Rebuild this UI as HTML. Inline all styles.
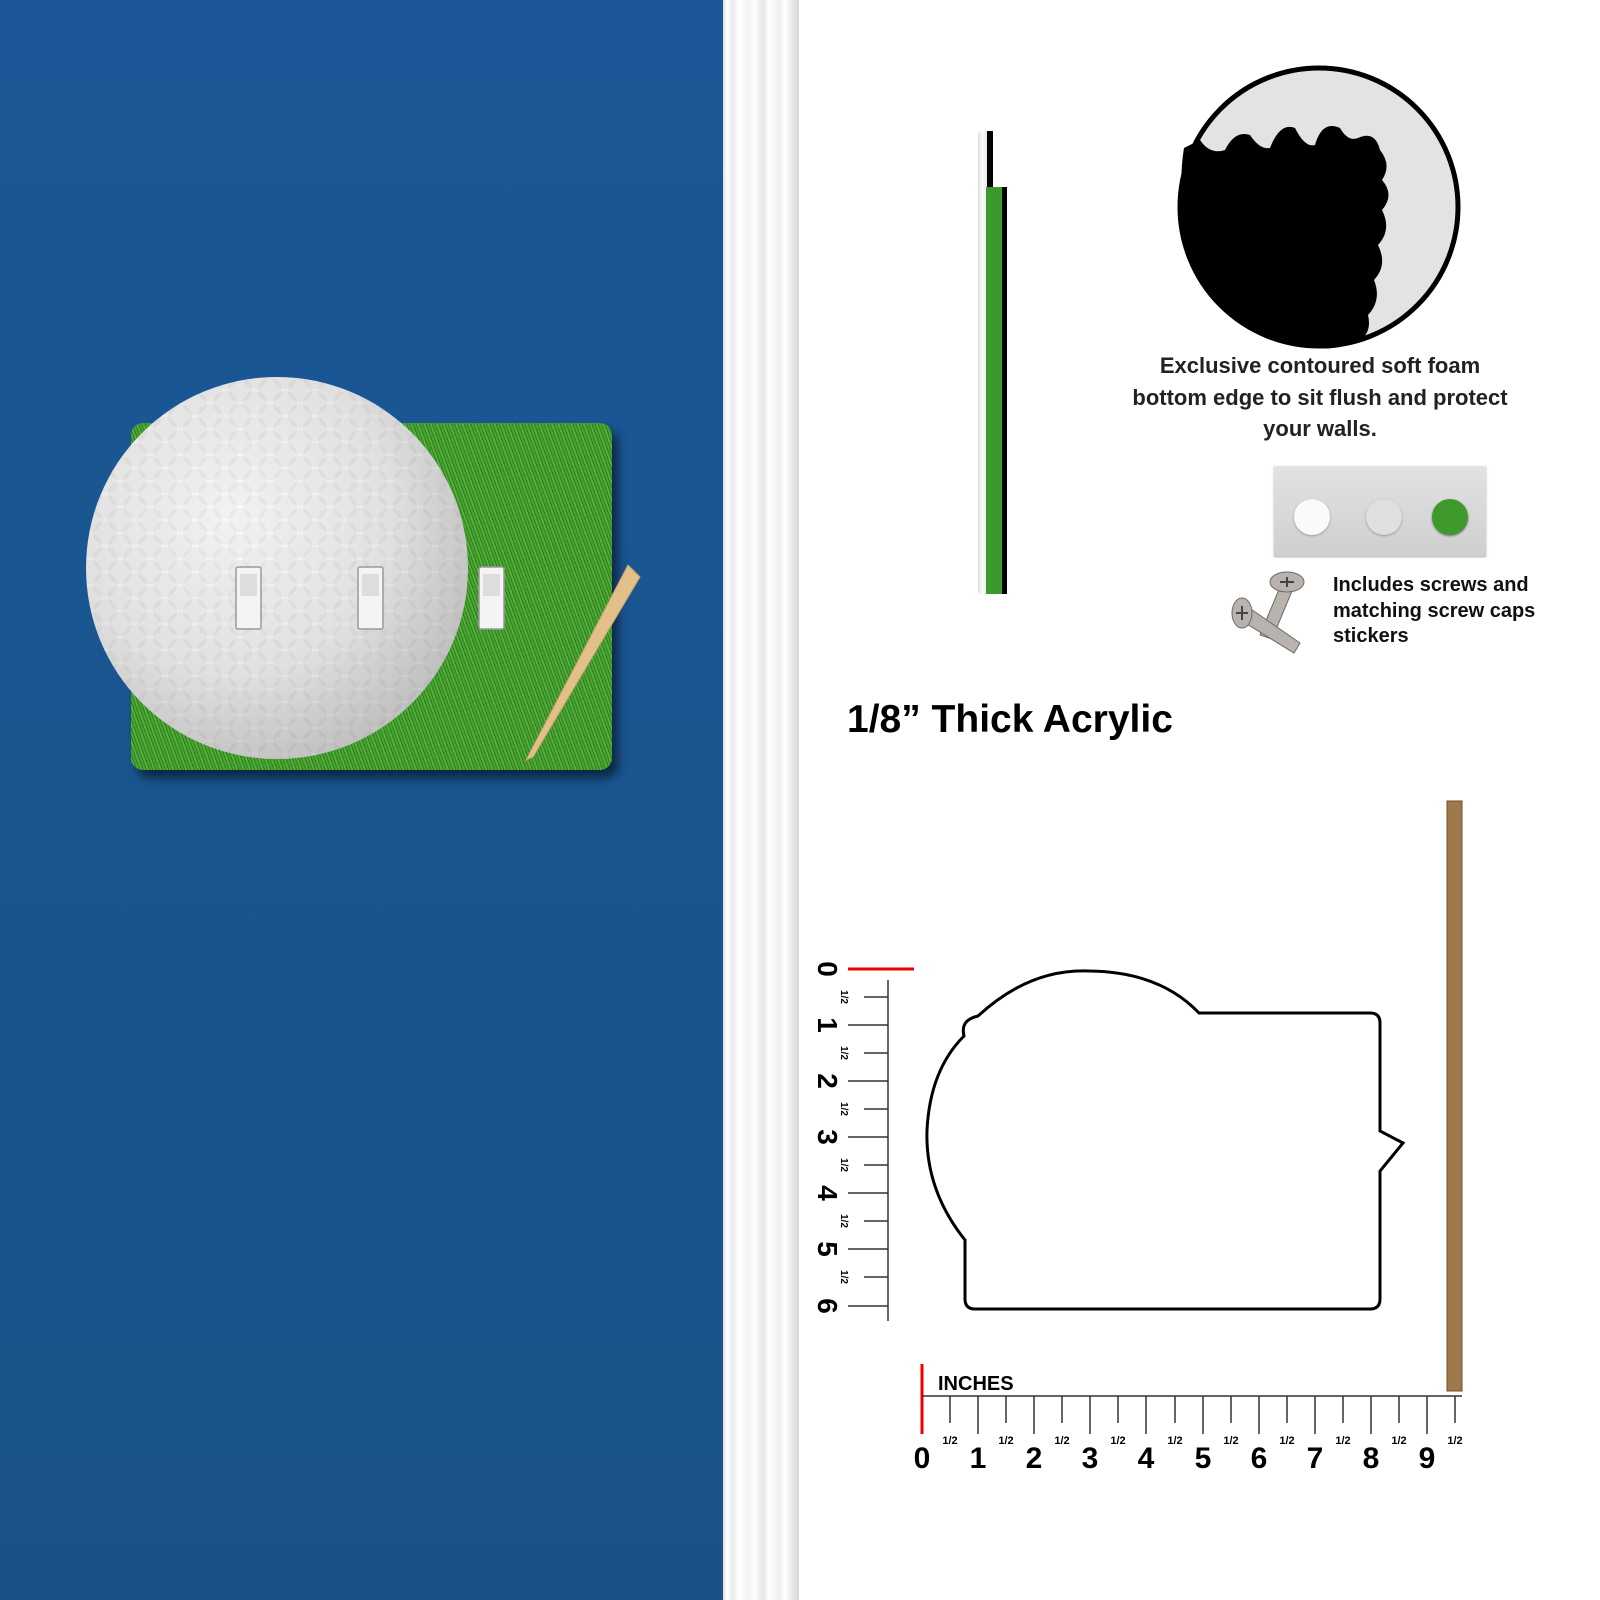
<!DOCTYPE html>
<html><head><meta charset="utf-8"><style>
*{margin:0;padding:0}
body{width:1600px;height:1600px;position:relative;overflow:hidden;background:#fff;font-family:"Liberation Sans",sans-serif}
.a{position:absolute}
</style></head><body>
<div class="a" style="left:0;top:0;width:723px;height:1600px;background:linear-gradient(180deg,#1b5796,#1a5590 50%,#1a5288)"></div>
<div class="a" style="left:723px;top:0;width:76px;height:1600px;background:linear-gradient(90deg,#dcdde0 0,#fff 4px,#e9eaec 10px,#fff 16px,#f2f2f3 26px,#fff 32px,#e4e5e7 40px,#fff 46px,#f0f0f1 56px,#fff 62px,#e6e6e8 70px,#d8d8da 76px)"></div>

<!-- plate -->
<div class="a" style="left:131px;top:423px;width:481px;height:347px;border-radius:12px;background:repeating-linear-gradient(70deg,#4aa332 0 2px,#2d7f1f 2px 3px,#55b03a 3px 5px,#2a7a1c 5px 6px),#3a9227;box-shadow:6px 8px 10px rgba(0,0,0,.55)"></div>
<svg class="a" style="left:0;top:0" width="723" height="900">
<defs>
<radialGradient id="b" cx="0.38" cy="0.36" r="0.7"><stop offset="0" stop-color="#fbfbfb"/><stop offset="0.6" stop-color="#e8e8e8"/><stop offset="1" stop-color="#c4c4c4"/></radialGradient>
<pattern id="d" width="30" height="26" patternUnits="userSpaceOnUse"><circle cx="15" cy="13" r="12" fill="#000" opacity=".035"/><circle cx="0" cy="0" r="12" fill="#000" opacity=".035"/><circle cx="30" cy="0" r="12" fill="#000" opacity=".035"/><circle cx="0" cy="26" r="12" fill="#000" opacity=".035"/><circle cx="30" cy="26" r="12" fill="#000" opacity=".035"/></pattern>
</defs>
<circle cx="277" cy="568" r="191" fill="url(#b)"/>
<circle cx="277" cy="568" r="191" fill="url(#d)"/>
<polygon points="628,565 640,577 533,757 526,760" fill="#e3bf8a" stroke="#c9a06a" stroke-width="1"/>
<g fill="#f4f4f4" stroke="#999" stroke-width="1.5">
<rect x="236" y="567" width="25" height="62" rx="2"/><rect x="358" y="567" width="25" height="62" rx="2"/><rect x="479" y="567" width="25" height="62" rx="2"/>
</g>
<g fill="#ddd"><rect x="240" y="574" width="17" height="22"/><rect x="362" y="574" width="17" height="22"/><rect x="483" y="574" width="17" height="22"/></g>
</svg>

<!-- side profile -->
<div class="a" style="left:983px;top:131px;width:10px;height:58px;background:#000"></div>
<div class="a" style="left:978px;top:131px;width:9px;height:463px;background:linear-gradient(90deg,#ddd,#fff,#e6e6e6);border-radius:4px 0 0 4px"></div>
<div class="a" style="left:986px;top:187px;width:18px;height:407px;background:#3c9a2a"></div>
<div class="a" style="left:1002px;top:187px;width:5px;height:407px;background:#000"></div>

<!-- foam circle -->
<svg class="a" style="left:1170px;top:60px" width="300" height="300">
<circle cx="149" cy="147" r="139" fill="#e3e3e3" stroke="#000" stroke-width="5"/>
<path d="M14 88 L30 80 Q40 95 55 90 Q65 70 80 75 Q90 90 100 88 Q110 62 125 68 Q135 88 145 85 Q152 60 170 68 Q178 82 188 78 Q205 70 210 90 Q222 105 212 120 Q225 135 212 150 Q222 170 208 185 Q218 205 204 220 Q212 240 198 255 Q202 272 190 280 Q170 290 149 288 A139 139 0 0 1 12 140 Q10 112 14 88Z" fill="#000"/>
</svg>
<div class="a" style="left:1080px;top:350px;width:480px;text-align:center;font-weight:bold;font-size:22px;line-height:31.5px;color:#222">Exclusive contoured soft foam<br>bottom edge to sit flush and protect<br>your walls.</div>

<!-- tape -->
<div class="a" style="left:1274px;top:466px;width:212px;height:90px;background:linear-gradient(180deg,#e2e2e2,#cfcfcf);box-shadow:0 1px 2px #aaa"></div>
<div class="a" style="left:1294px;top:499px;width:36px;height:36px;border-radius:50%;background:#fafafa;box-shadow:0 1px 2px #999"></div>
<div class="a" style="left:1366px;top:499px;width:36px;height:36px;border-radius:50%;background:#e0e0e0;box-shadow:0 1px 2px #999"></div>
<div class="a" style="left:1432px;top:499px;width:36px;height:36px;border-radius:50%;background:#3e9a2a;box-shadow:0 1px 2px #666"></div>
<svg class="a" style="left:1220px;top:565px" width="100" height="100">
<g stroke="#6e6a66" fill="#b8b3ae">
<path d="M60 22 L40 70 L52 74 L72 26Z"/><ellipse cx="67" cy="17" rx="17" ry="10"/>
<path d="M28 42 L80 78 L74 88 L22 56Z"/><ellipse cx="22" cy="48" rx="10" ry="15"/>
</g>
<path d="M60 17 L74 17 M67 12 L67 22 M22 41 L22 55 M16 48 L28 48" stroke="#444" stroke-width="2"/>
</svg>
<div class="a" style="left:1333px;top:573px;font-weight:bold;font-size:20px;line-height:25.5px;color:#111">Includes screws and<br>matching screw caps<br>stickers</div>

<div class="a" style="left:847px;top:698px;font-weight:bold;font-size:39px;color:#000">1/8” Thick Acrylic</div>

<!-- rulers and shape -->
<svg class="a" style="left:0;top:0" width="1600" height="1600" font-family="Liberation Sans" font-weight="bold">
<path d="M978 1016 Q1030 968 1090 971 Q1160 972 1199 1013 L1370 1013 Q1380 1013 1380 1023 L1380 1131 L1403 1143 L1380 1171 L1380 1299 Q1380 1309 1370 1309 L975 1309 Q965 1309 965 1299 L965 1240 Q925 1190 927 1130 Q930 1070 964 1036 Q960 1020 978 1016Z" fill="none" stroke="#000" stroke-width="3"/>
<rect x="1447" y="801" width="15" height="590" fill="#a0784a" stroke="#6e5230"/>
<line x1="848" y1="969" x2="914" y2="969" stroke="#e00" stroke-width="3"/>
<line x1="888" y1="980" x2="888" y2="1321" stroke="#333" stroke-width="1.5"/>
<g stroke="#333" stroke-width="1.5">
<line x1="864" y1="997" x2="888" y2="997"/><line x1="848" y1="1025" x2="888" y2="1025"/>
<line x1="864" y1="1053" x2="888" y2="1053"/><line x1="848" y1="1081" x2="888" y2="1081"/>
<line x1="864" y1="1109" x2="888" y2="1109"/><line x1="848" y1="1137" x2="888" y2="1137"/>
<line x1="864" y1="1165" x2="888" y2="1165"/><line x1="848" y1="1193" x2="888" y2="1193"/>
<line x1="864" y1="1221" x2="888" y2="1221"/><line x1="848" y1="1249" x2="888" y2="1249"/>
<line x1="864" y1="1277" x2="888" y2="1277"/><line x1="848" y1="1306" x2="888" y2="1306"/>
</g>
<g font-size="28">
<text transform="translate(818,969) rotate(90)" text-anchor="middle">0</text>
<text transform="translate(818,1025) rotate(90)" text-anchor="middle">1</text>
<text transform="translate(818,1081) rotate(90)" text-anchor="middle">2</text>
<text transform="translate(818,1137) rotate(90)" text-anchor="middle">3</text>
<text transform="translate(818,1193) rotate(90)" text-anchor="middle">4</text>
<text transform="translate(818,1249) rotate(90)" text-anchor="middle">5</text>
<text transform="translate(818,1306) rotate(90)" text-anchor="middle">6</text>
</g>
<g font-size="10">
<text transform="translate(841,997) rotate(90)" text-anchor="middle">1/2</text>
<text transform="translate(841,1053) rotate(90)" text-anchor="middle">1/2</text>
<text transform="translate(841,1109) rotate(90)" text-anchor="middle">1/2</text>
<text transform="translate(841,1165) rotate(90)" text-anchor="middle">1/2</text>
<text transform="translate(841,1221) rotate(90)" text-anchor="middle">1/2</text>
<text transform="translate(841,1277) rotate(90)" text-anchor="middle">1/2</text>
</g>
<line x1="922" y1="1364" x2="922" y2="1434" stroke="#e00" stroke-width="3"/>
<text x="938" y="1390" font-size="20">INCHES</text>
<line x1="922" y1="1396" x2="1462" y2="1396" stroke="#333" stroke-width="1.5"/>
<g stroke="#333" stroke-width="1.5">
<line x1="950" y1="1396" x2="950" y2="1423"/><line x1="978" y1="1396" x2="978" y2="1434"/>
<line x1="1006" y1="1396" x2="1006" y2="1423"/><line x1="1034" y1="1396" x2="1034" y2="1434"/>
<line x1="1062" y1="1396" x2="1062" y2="1423"/><line x1="1090" y1="1396" x2="1090" y2="1434"/>
<line x1="1118" y1="1396" x2="1118" y2="1423"/><line x1="1146" y1="1396" x2="1146" y2="1434"/>
<line x1="1175" y1="1396" x2="1175" y2="1423"/><line x1="1203" y1="1396" x2="1203" y2="1434"/>
<line x1="1231" y1="1396" x2="1231" y2="1423"/><line x1="1259" y1="1396" x2="1259" y2="1434"/>
<line x1="1287" y1="1396" x2="1287" y2="1423"/><line x1="1315" y1="1396" x2="1315" y2="1434"/>
<line x1="1343" y1="1396" x2="1343" y2="1423"/><line x1="1371" y1="1396" x2="1371" y2="1434"/>
<line x1="1399" y1="1396" x2="1399" y2="1423"/><line x1="1427" y1="1396" x2="1427" y2="1434"/>
<line x1="1455" y1="1396" x2="1455" y2="1423"/>
</g>
<g font-size="30" text-anchor="middle">
<text x="922" y="1468">0</text><text x="978" y="1468">1</text><text x="1034" y="1468">2</text><text x="1090" y="1468">3</text><text x="1146" y="1468">4</text><text x="1203" y="1468">5</text><text x="1259" y="1468">6</text><text x="1315" y="1468">7</text><text x="1371" y="1468">8</text><text x="1427" y="1468">9</text>
</g>
<g font-size="11" text-anchor="middle">
<text x="950" y="1444">1/2</text><text x="1006" y="1444">1/2</text><text x="1062" y="1444">1/2</text><text x="1118" y="1444">1/2</text><text x="1175" y="1444">1/2</text><text x="1231" y="1444">1/2</text><text x="1287" y="1444">1/2</text><text x="1343" y="1444">1/2</text><text x="1399" y="1444">1/2</text><text x="1455" y="1444">1/2</text>
</g>
</svg>
</body></html>
